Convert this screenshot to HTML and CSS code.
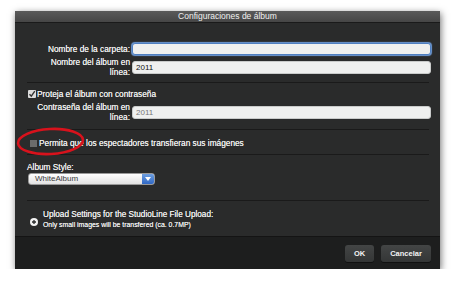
FILE: index.html
```html
<!DOCTYPE html>
<html lang="es">
<head>
	<meta charset="UTF-8">
	<title>Configuraciones de álbum</title>
	<link rel="stylesheet" href="styles.css">
</head>
<body>
	<div class="dialog">
		<div class="titlebar">Configuraciones de álbum</div>
		<div class="content">
			<div class="row row-first">
				<label class="lbl">Nombre de la carpeta:</label>
				<div class="field focus"></div>
			</div>
			<div class="row row-two">
				<label class="lbl">Nombre del álbum en<br>línea:</label>
				<div class="field">2011</div>
			</div>
			<div class="sep sep1"></div>
			<div class="check-row">
				<span class="box checked">
					<svg width="8" height="8" viewBox="0 0 8 8"><path d="M1.5 4.2 L3.3 6.2 L6.8 1.2" fill="none" stroke="#333" stroke-width="1.4"/></svg>
				</span>
				<span>Proteja el álbum con contraseña</span>
			</div>
			<div class="row row-pass">
				<label class="lbl">Contraseña del álbum en<br>línea:</label>
				<div class="field gray">2011</div>
			</div>
			<div class="sep sep2"></div>
			<div class="check-row permit">
				<span class="box dim"></span>
				<span>Permita que los espectadores transfieran sus imágenes</span>
			</div>
			<div class="sep sep3"></div>
			<div class="style-lbl">Album Style:</div>
			<div class="select">
				<span class="sel-text">WhiteAlbum</span>
				<span class="sel-btn">
					<svg width="6" height="4" viewBox="0 0 6 4"><path d="M0 0 H6 L3 4 Z" fill="#fff"/></svg>
				</span>
			</div>
			<div class="sep sep4"></div>
			<div class="upload">
				<span class="plus">
					<svg width="8" height="8" viewBox="0 0 8 8"><circle cx="4" cy="4" r="4" fill="#f2f2f2"/><path d="M4 2 V6 M2 4 H6" stroke="#2a2b2b" stroke-width="1.3"/></svg>
				</span>
				<div>
					<div class="up-title">Upload Settings for the StudioLine File Upload:</div>
					<div class="up-note">Only small images will be transfered (ca. 0.7MP)</div>
				</div>
			</div>
		</div>
		<div class="footer">
			<button class="btn ok">OK</button>
			<button class="btn">Cancelar</button>
		</div>
		<svg class="mark" width="71" height="31" viewBox="0 0 71 31"><ellipse cx="35.5" cy="15.5" rx="32.5" ry="12.5" transform="rotate(-3 35.5 15.5)" fill="none" stroke="#d8121c" stroke-width="2.6"/></svg>
	</div>
</body>
</html>
```

FILE: styles.css
```css
body{margin: 0;background: #fff;font-family: "Liberation Sans", Arial, sans-serif;}
.dialog{position: relative;margin: 11px 0 0 15px;width: 425px;height: 258px;background: #2a2b2b;box-shadow: 1px 2px 7px rgba(0,0,0,0.55);display: flex;flex-direction: column;}
.titlebar{height: 11px;line-height: 11px;background: linear-gradient(#5a5a5a,#464646);color: #f0f0f0;font-size: 8.5px;text-align: center;border-bottom: 1px solid #1a1a1a;}
.content{flex: 1;padding: 0 11px 0 12px;color: #ececec;font-size: 8.3px;text-shadow: 0 0 0.3px #ececec;}
.row{display: flex;align-items: center;}
.row-first{margin-top: 19px;height: 13px;}
.row-two{margin-top: 2px;height: 20px;}
.row-pass{margin-top: 3px;height: 20px;}
.lbl{width: 103px;text-align: right;line-height: 10px;margin-right: 2px;flex: none;}
.field{flex: 1;height: 11px;line-height: 11px;background: #eff0ef;border-radius: 3px;color: #111;font-size: 8px;padding-left: 3px;border: 1px solid #c9cbca;box-sizing: content-box;margin-right: -2px;text-shadow: none;}
.field.focus{border-color: #4f7fc0;box-shadow: 0 0 1px 1px #6d9ad6;height: 10px;}
.field.gray{color: #777;}
.sep{height: 1px;background: #1a1a1a;}
.sep1{margin-top: 5px;}
.sep2{margin-top: 7px;}
.sep3{margin-top: 6px;}
.sep4{margin-top: 15px;}
.check-row{display: flex;align-items: center;height: 10px;margin-top: 6px;}
.box{width: 8px;height: 8px;margin: 0 1px 0 1px;display: flex;align-items: center;justify-content: center;}
.box.checked{background: #dcdcdc;border-radius: 1px;}
.box.dim{width: 7px;height: 7px;background: #6b6b6b;margin: 0 2px 0 3px;}
.permit{margin-top: 8px;}
.style-lbl{margin-top: 7px;line-height: 10px;}
.select{display: flex;width: 125px;height: 10px;margin: 1px 0 0 1px;border-radius: 3px;background: linear-gradient(#ffffff,#e2e2e2);overflow: hidden;border: 1px solid #9a9a9a;box-sizing: content-box;text-shadow: none;}
.sel-text{flex: 1;color: #3a3a3a;line-height: 10px;font-size: 8px;padding-left: 6px;}
.sel-btn{width: 12px;background: linear-gradient(#6d9ee0,#2f67c4);display: flex;align-items: center;justify-content: center;}
.upload{display: flex;align-items: center;margin-top: 9px;}
.plus{width: 8px;height: 8px;margin: 3px 5px 0 3px;display: flex;}
.up-title{line-height: 10px;font-size: 8.2px;}
.up-note{line-height: 10px;font-size: 6.9px;}
.footer{height: 32px;background: #1d1e1e;border-top: 1px solid #141414;display: flex;align-items: center;justify-content: flex-end;gap: 7px;padding-right: 9px;}
.btn{height: 17px;border: none;border-radius: 3px;background: linear-gradient(#434545,#343636);color: #f4f4f4;font-family: "Liberation Sans", Arial, sans-serif;font-weight: bold;font-size: 7.5px;padding: 0;width: 50px;box-shadow: 0 1px 0 #111;}
.btn.ok{width: 29px;}
.mark{position: absolute;left: 0;top: 115px;}
```
